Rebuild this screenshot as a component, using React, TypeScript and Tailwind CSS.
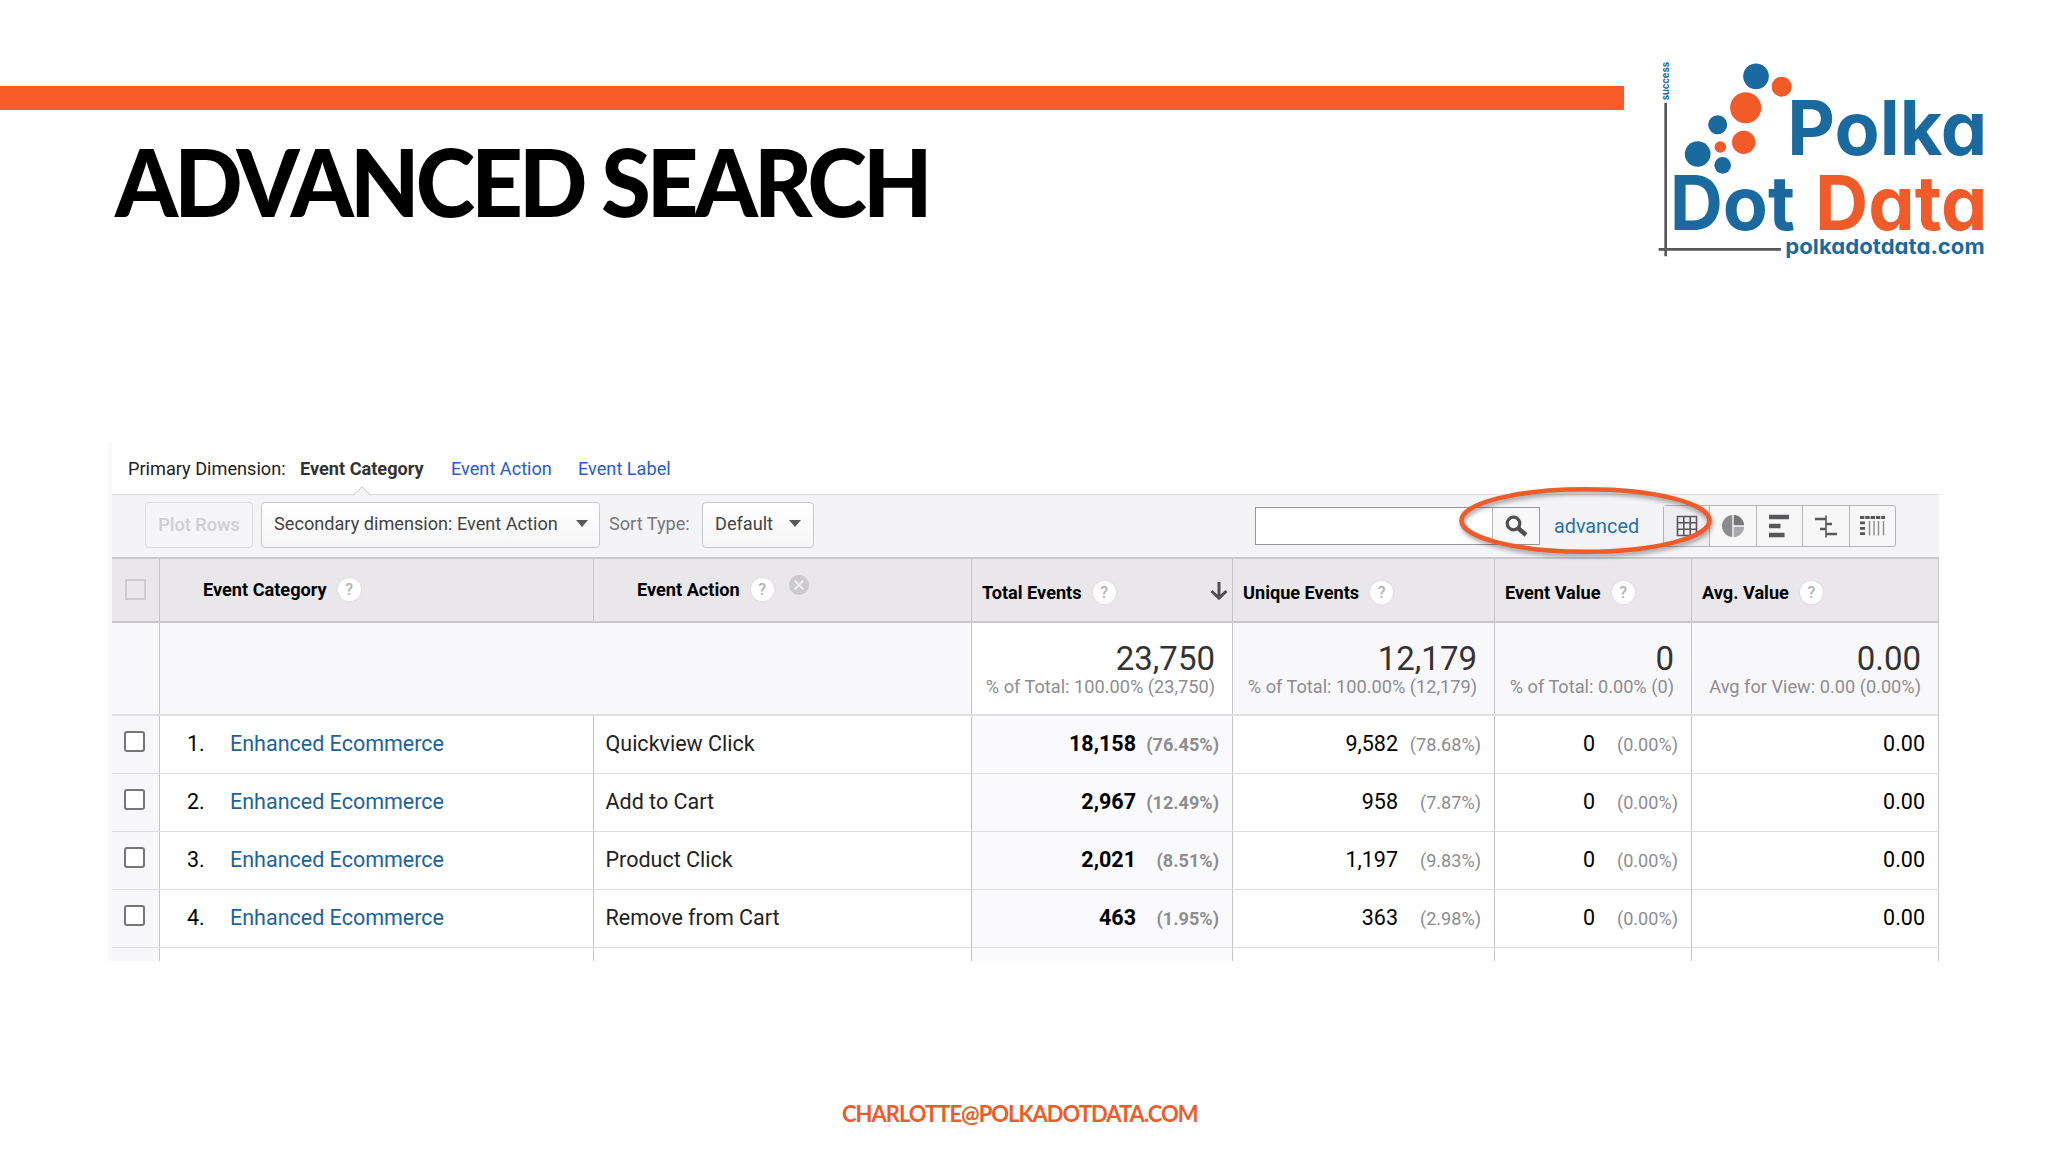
import type { ReactNode } from 'react'

interface EventRow {
  category: string
  action: string
  total: [string, string]
  unique: [string, string]
  value: [string, string]
  avg: string
}

const rows: EventRow[] = [
  { category: 'Enhanced Ecommerce', action: 'Quickview Click', total: ['18,158', '(76.45%)'], unique: ['9,582', '(78.68%)'], value: ['0', '(0.00%)'], avg: '0.00' },
  { category: 'Enhanced Ecommerce', action: 'Add to Cart', total: ['2,967', '(12.49%)'], unique: ['958', '(7.87%)'], value: ['0', '(0.00%)'], avg: '0.00' },
  { category: 'Enhanced Ecommerce', action: 'Product Click', total: ['2,021', '(8.51%)'], unique: ['1,197', '(9.83%)'], value: ['0', '(0.00%)'], avg: '0.00' },
  { category: 'Enhanced Ecommerce', action: 'Remove from Cart', total: ['463', '(1.95%)'], unique: ['363', '(2.98%)'], value: ['0', '(0.00%)'], avg: '0.00' },
]

const gridCls = 'grid grid-cols-[48px_434px_378px_261px_262px_197px_247px]'
const cellCls = 'border-r border-[#c6c5c8]'
const btnCls = 'flex h-[46px] items-center rounded-[4px] border border-[#c9c9cb] bg-linear-to-b from-white to-[#f6f6f7]'

function Logo() {
  const word = { fontFeatureSettings: '"cv11"' }
  return (
    <svg width="424" height="240" viewBox="72 0 1272 720" className="shrink-0 font-['Inter',sans-serif] font-bold">
      <g fill="#1b6a9f">
        <circle cx="468" cy="109" r="38.5" />
        <circle cx="353" cy="254" r="28.5" />
        <circle cx="293" cy="342" r="38.5" />
        <circle cx="368" cy="376" r="25" />
      </g>
      <g fill="#f15a29">
        <circle cx="545" cy="140" r="30" />
        <circle cx="437" cy="203" r="46.5" />
        <circle cx="431" cy="307" r="35" />
        <circle cx="361" cy="321" r="17.5" />
      </g>
      <path d="M197 188V649M176 628H543" stroke="#58585b" strokeWidth="8" />
      <g style={word}>
        <text x="562" y="344" fontSize="225" textLength="600" lengthAdjust="spacingAndGlyphs" fill="#1b6a9f">Polka</text>
        <text x="209" y="571" fontSize="225" textLength="376" lengthAdjust="spacingAndGlyphs" fill="#1b6a9f">Dot</text>
        <text x="645" y="571" fontSize="225" textLength="517" lengthAdjust="spacingAndGlyphs" fill="#f15a29">Data</text>
        <text x="556" y="641" fontSize="62" textLength="598" lengthAdjust="spacingAndGlyphs" fill="#1b6a9f">polkadotdata.com</text>
        <text transform="translate(206 181) rotate(-90)" fontSize="30" textLength="115" lengthAdjust="spacingAndGlyphs" fill="#1b6a9f">success</text>
      </g>
    </svg>
  )
}

function Help() {
  return (
    <span className="flex size-[23px] shrink-0 items-center justify-center rounded-full bg-white text-[16px] font-medium text-[#b3b3b5] shadow-[0_0_2px_#cfcfcf]">?</span>
  )
}

function Caret() {
  return <span className="border-x-[6px] border-t-[7px] border-x-transparent border-t-[#58585a]" />
}

function Summary({ value, note, className }: { value: string; note: string; className: string }) {
  return (
    <div className={`${cellCls} ${className} pt-[15px] text-right`}>
      <div className="text-[33px] leading-[42px] text-[#333]">{value}</div>
      <div className="text-[18.2px] leading-[14px] whitespace-nowrap text-[#8d8d8f]">{note}</div>
    </div>
  )
}

function Metric({ data, bold }: { data: [string, string]; bold?: boolean }) {
  return (
    <div className={`${cellCls} flex items-center justify-end pr-[13px] ${bold ? 'bg-[#faf9fc] font-bold' : ''}`}>
      <span>{data[0]}</span>
      <span className="w-[83px] text-right text-[18.1px] text-[#8d8d8f]">{data[1]}</span>
    </div>
  )
}

function ViewButton({ children, first }: { children: ReactNode; first?: boolean }) {
  return (
    <span className={`flex flex-1 items-center justify-center border-r border-[#b9b9bc] last:border-r-0 ${first ? 'bg-[#eeeef0]' : ''}`}>
      <svg width="26" height="24" viewBox="0 0 26 24">{children}</svg>
    </span>
  )
}

function Toolbar() {
  return (
    <div className="relative flex h-[63px] border-t border-[#dfdfe1] bg-[#f4f3f6] pt-[7px] text-[18.15px] text-[#444]">
      {/* Notch under the active dimension */}
      <svg className="absolute -top-[9px] left-[240px]" width="20" height="10" viewBox="0 0 20 10">
        <path d="M1 9.5L10 1L19 9.5" fill="#f4f3f6" stroke="#c9c9cb" />
      </svg>
      <div className="ml-[33px] flex h-[46px] w-[108px] items-center justify-center rounded-[4px] border border-[#dcdcde] bg-[#f5f4f6] font-medium text-[#cfcfd1]">Plot Rows</div>
      <div className={`${btnCls} ml-[8px] w-[339px] justify-between pr-[11px] pb-[3px] pl-[12px]`}>
        Secondary dimension: Event Action
        <Caret />
      </div>
      <div className="ml-[9px] w-[93px] leading-[44px] text-[#77777a]">Sort Type:</div>
      <div className={`${btnCls} w-[112px] justify-between pr-[12px] pb-[3px] pl-[12px]`}>
        Default
        <Caret />
      </div>
      <div className="mt-[5px] ml-[441px] flex h-[38px] w-[285px] border border-[#98989a] bg-white">
        <span className="w-[237px] border-r border-[#b9b9bc]" />
        <span className="flex flex-1 items-center justify-center bg-[#f8f8f9]">
          <svg width="24" height="24" viewBox="0 0 24 24" fill="none" stroke="#4f4f51">
            <circle cx="9.5" cy="9.5" r="6.3" strokeWidth="3.2" />
            <path d="M14 14L22 21" strokeWidth="4.4" />
          </svg>
        </span>
      </div>
      <span className="ml-[14px] w-[109px] text-[19.8px] leading-[49px] text-[#2a6fad]">advanced</span>
      <div className="mt-[3px] flex h-[42px] w-[233px] rounded-[3px] border border-[#b5b5b8] bg-[#f7f7f8]">
        <ViewButton first>
          <path d="M3 2.5H23M3 8.8H23M3 15.2H23M3 21.5H23M3.5 2V22M9.8 2V22M16.2 2V22M22.5 2V22" stroke="#58585a" strokeWidth="1.6" />
        </ViewButton>
        <ViewButton>
          <circle cx="13" cy="12" r="11" fill="#8b8b8d" />
          <path d="M13 12V1A11 11 0 0 1 24 12Z" fill="#77777a" />
          <path d="M13 12H24A11 11 0 0 1 13 23Z" fill="#a9a9ab" />
          <path d="M13 1V23M13 12H24" stroke="#f7f7f8" strokeWidth="1.4" />
        </ViewButton>
        <ViewButton>
          <path d="M2 3H22M2 12H13.5M2 21H17.5" stroke="#58585a" strokeWidth="4.4" />
        </ViewButton>
        <ViewButton>
          <path d="M2 5H13M13 10H19M7 15H13M13 20H24" stroke="#58585a" strokeWidth="2.6" />
          <path d="M13 1.5V23.5" stroke="#58585a" strokeWidth="1.6" />
        </ViewButton>
        <ViewButton>
          <path d="M1 3.5H26" stroke="#58585a" strokeWidth="3" strokeDasharray="4.4 0.9" />
          <path d="M3.5 7.5V21.5" stroke="#58585a" strokeWidth="5" strokeDasharray="2.8 2.6" />
          <path d="M10.5 7V21.5M15 7V21.5M19.5 7V21.5M24.5 7V21.5" stroke="#8b8b8d" strokeWidth="1.4" />
        </ViewButton>
      </div>
      {/* Highlight around the advanced link */}
      <svg className="absolute -top-[15px] left-[1342px] drop-shadow-[1px_3px_2px_rgba(0,0,0,0.35)]" width="264" height="80" viewBox="0 0 264 80">
        <ellipse cx="131.5" cy="40.5" rx="124" ry="31.3" fill="none" stroke="#f15a29" strokeWidth="4.6" />
      </svg>
    </div>
  )
}

function Report() {
  return (
    <div className="mt-[202px] ml-[108px] h-[519px] w-[1831px] overflow-hidden border-l-4 border-[#fafafa] font-['Roboto',sans-serif] text-black">
      <div className="flex h-[52px] pt-[14px] pl-[16px] text-[18.15px] leading-[26px] whitespace-nowrap text-[#222]">
        <span className="w-[172px]">Primary Dimension:</span>
        <span className="w-[151px] font-bold text-[#333]">Event Category</span>
        <span className="w-[127px] text-[#2a5bd0]">Event Action</span>
        <span className="text-[#2a5bd0]">Event Label</span>
      </div>

      <Toolbar />

      <div className={`${gridCls} h-[66px] border-y-2 border-[#c9c8cb] bg-[#e9e7e9] text-[18.15px] font-bold whitespace-nowrap`}>
        <div className={`${cellCls} pt-[20px] pl-[13px]`}>
          <div className="size-[21px] border-2 border-[#cbcacc]" />
        </div>
        <div className={`${cellCls} flex items-center gap-[11px] pb-[1px] pl-[43px]`}>Event Category <Help /></div>
        <div className={`${cellCls} flex items-center gap-[11px] pb-[1px] pl-[43px]`}>
          Event Action <Help />
          <svg className="mb-[9px] ml-[4px]" width="20" height="20" viewBox="0 0 20 20">
            <circle cx="10" cy="10" r="10" fill="#cbcacc" />
            <path d="M5.5 5.5L14.5 14.5M14.5 5.5L5.5 14.5" stroke="#efeef0" strokeWidth="1.8" />
          </svg>
        </div>
        <div className={`${cellCls} flex items-center gap-[11px] pt-[5px] pr-[4px] pl-[10px]`}>
          Total Events <Help />
          <svg className="mb-[3px] ml-auto" width="18" height="20" viewBox="0 0 18 20" fill="none" stroke="#4f4f51" strokeWidth="3">
            <path d="M9 1V17M1.5 10L9 17.2L16.5 10" />
          </svg>
        </div>
        <div className={`${cellCls} flex items-center gap-[11px] pt-[5px] pl-[10px]`}>Unique Events <Help /></div>
        <div className={`${cellCls} flex items-center gap-[11px] pt-[5px] pl-[10px]`}>Event Value <Help /></div>
        <div className={`${cellCls} flex items-center gap-[11px] pt-[5px] pl-[10px]`}>Avg. Value <Help /></div>
      </div>

      <div className={`${gridCls} h-[93px] border-b-2 border-[#dfdee1] bg-[#f8f7fa]`}>
        <div className={cellCls} />
        <div className={`${cellCls} col-span-2`} />
        <Summary value="23,750" note="% of Total: 100.00% (23,750)" className="bg-white pr-[17px]" />
        <Summary value="12,179" note="% of Total: 100.00% (12,179)" className="pr-[17px]" />
        <Summary value="0" note="% of Total: 0.00% (0)" className="pr-[17px]" />
        <Summary value="0.00" note="Avg for View: 0.00 (0.00%)" className="pr-[17px]" />
      </div>

      {rows.map((row, i) => (
        <div key={row.action} className={`${gridCls} h-[58px] border-b border-[#dedde0] bg-white text-[21.5px]`}>
          <div className={`${cellCls} bg-[#f7f6f8] pt-[15px] pl-[12px]`}>
            <div className="size-[21px] rounded-[3px] border-2 border-[#767678] bg-white" />
          </div>
          <div className={`${cellCls} flex items-center pl-[27px]`}>
            <span className="w-[43px]">{i + 1}.</span>
            <span className="text-[#20639b]">{row.category}</span>
          </div>
          <div className={`${cellCls} flex items-center pl-[11.5px] text-[#222]`}>{row.action}</div>
          <Metric data={row.total} bold />
          <Metric data={row.unique} />
          <Metric data={row.value} />
          <div className={`${cellCls} flex items-center justify-end pr-[13px]`}>{row.avg}</div>
        </div>
      ))}

      {/* Top of the fifth row, cut off */}
      <div className={`${gridCls} h-[14px] bg-white`}>
        <div className={`${cellCls} bg-[#f7f6f8]`} />
        <div className={cellCls} />
        <div className={cellCls} />
        <div className={`${cellCls} bg-[#faf9fc]`} />
        <div className={cellCls} />
        <div className={cellCls} />
        <div className={cellCls} />
      </div>
    </div>
  )
}

export default function App() {
  return (
    <div className="h-[1152px] w-[2048px] overflow-hidden bg-white">
      <header className="flex h-[240px] pt-[40px]">
        <div className="w-[1624px] shrink-0 pt-[46px]">
          <div className="h-[24px] bg-[#f95d27]" />
          <h1 className="ml-[115px] w-max origin-left scale-x-[0.957] pt-[14px] font-['Lato',sans-serif] text-[94px] leading-[113px] font-black tracking-[-4px] text-black">ADVANCED SEARCH</h1>
        </div>
        <Logo />
      </header>
      <Report />
      <footer className="mt-[138px] ml-[842px] w-max font-['Lato',sans-serif] text-[22px] leading-[30px] font-bold tracking-[-1px] text-[#f15a29]">CHARLOTTE@POLKADOTDATA.COM</footer>
    </div>
  )
}
